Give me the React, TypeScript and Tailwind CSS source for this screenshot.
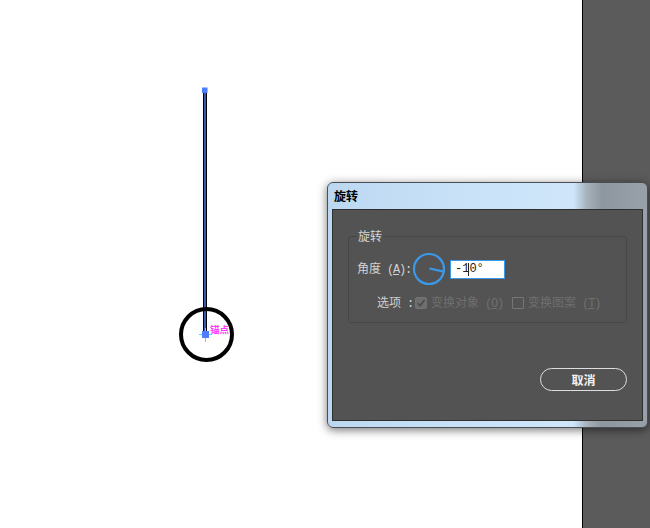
import React from "react";

const cjk = { fontFamily: '"Noto Sans CJK SC", "Noto Sans", sans-serif' };
const mono = { fontFamily: '"Liberation Mono", "DejaVu Sans Mono", monospace' };

function Dial() {
  const a = (10 * Math.PI) / 180;
  const x2 = 17 + 15 * Math.cos(a);
  const y2 = 17 + 15 * Math.sin(a);
  return (
    <svg width="34" height="34" viewBox="0 0 34 34" className="block">
      <circle cx="17" cy="17" r="15" fill="none" stroke="#3b99ea" strokeWidth="2.2" />
      <line x1="17.5" y1="16.5" x2={x2} y2={y2} stroke="#3b99ea" strokeWidth="2.2" />
    </svg>
  );
}

function Canvas() {
  return (
    <svg width="582" height="528" className="block" style={cjk}>
      <line x1="205" y1="91" x2="205" y2="334" stroke="#000" strokeWidth="4" />
      <line x1="205" y1="91" x2="205" y2="334" stroke="#4f7dff" strokeWidth="1.4" />
      <rect x="202" y="87.5" width="5.5" height="5.5" fill="#4f7dff" />
      <circle cx="206.5" cy="334.5" r="25.5" fill="none" stroke="#000" strokeWidth="4" />
      <line x1="199" y1="334.5" x2="212" y2="334.5" stroke="#2ee6ff" strokeWidth="1" />
      <line x1="205.5" y1="328" x2="205.5" y2="342" stroke="#2ee6ff" strokeWidth="1" />
      <rect x="202" y="331" width="7" height="7" fill="#4f7dff" />
      <text x="210" y="333" fontSize="9.5" fill="#ff3cff" fontWeight="bold">锚点</text>
    </svg>
  );
}

function Mono({ children }: { children?: React.ReactNode }) {
  return (
    <span style={mono} className="text-[12px] tracking-[-1.2px]">
      {children}
    </span>
  );
}

export default function App() {
  return (
    <div className="relative w-[650px] h-[528px] flex overflow-hidden bg-white" style={cjk}>
      <div className="w-[582px] h-full bg-white">
        <Canvas />
      </div>
      <div className="flex-1 h-full bg-[#5b5b5b] border-l border-black" />

      {/* Dialog window */}
      <div className="absolute left-[327px] top-[182px] w-[321px] h-[246px] rounded-[6px] border border-[#4a4f55] shadow-[0_2px_10px_rgba(0,0,0,0.55)] bg-[linear-gradient(to_right,#bcd8f1_0%,#c9e2f8_45%,#cfe6fa_77%,#a6b2bd_81%,#8e979f_86%,#98a1a9_100%)] flex flex-col px-[4px] pb-[6px]">
        <div className="h-[26px] flex items-center pl-[2px] text-[12px] font-bold text-black">旋转</div>
        <div className="flex-1 bg-[#535353] border border-[#2f2f2f] flex flex-col px-[15px] pt-[19px]">
          <fieldset className="border border-[#474747] rounded-[3px] px-[8px] pb-[11px] h-[94px]">
            <legend className="px-[1px] text-[12px] leading-[14px] text-[#d4d4d4]">旋转</legend>
            <div className="flex items-center mt-[9px] h-[34px]">
              <span className="w-[55px] text-[12px] text-[#d2d2d2] whitespace-nowrap">
                角度<Mono> (<span className="underline">A</span>):</Mono>
              </span>
              <Dial />
              <div
                className="ml-[4px] w-[55px] h-[19px] border border-[#3b99ea] bg-white flex items-center pl-[4px] text-[12px] text-[#222] leading-none"
                style={mono}
              >
                <span>-1</span>
                <span className="inline-block w-[1px] h-[13px] bg-[#222] -ml-[1px]" />
                <span>0°</span>
              </div>
            </div>
            <div className="flex items-center mt-[9px] h-[16px] pl-[20px] text-[12px] whitespace-nowrap">
              <span className="text-[#cfcfcf]">
                选项<Mono> :</Mono>
              </span>
              <span className="ml-[2px] w-[12px] h-[12px] rounded-[2px] bg-[#6e6e6e] border border-[#727272] flex items-center justify-center">
                <svg width="10" height="10" viewBox="0 0 10 10">
                  <path d="M1.5 5.2 L4 7.6 L8.5 2.2" fill="none" stroke="#4e4e4e" strokeWidth="1.8" />
                </svg>
              </span>
              <span className="ml-[4px] text-[#6f6f6f]">
                变换对象<Mono> (<span className="underline">O</span>)</Mono>
              </span>
              <span className="ml-[9px] w-[12px] h-[12px] rounded-[1px] border border-[#767676]" />
              <span className="ml-[4px] text-[#6f6f6f]">
                变换图案<Mono> (<span className="underline">T</span>)</Mono>
              </span>
            </div>
          </fieldset>
          <div className="flex justify-end mt-[45px]">
            <div className="w-[87px] h-[23px] rounded-full border-[1.5px] border-[#dedede] flex items-center justify-center text-[12px] font-bold text-[#f2f2f2]">
              取消
            </div>
          </div>
        </div>
      </div>
    </div>
  );
}
